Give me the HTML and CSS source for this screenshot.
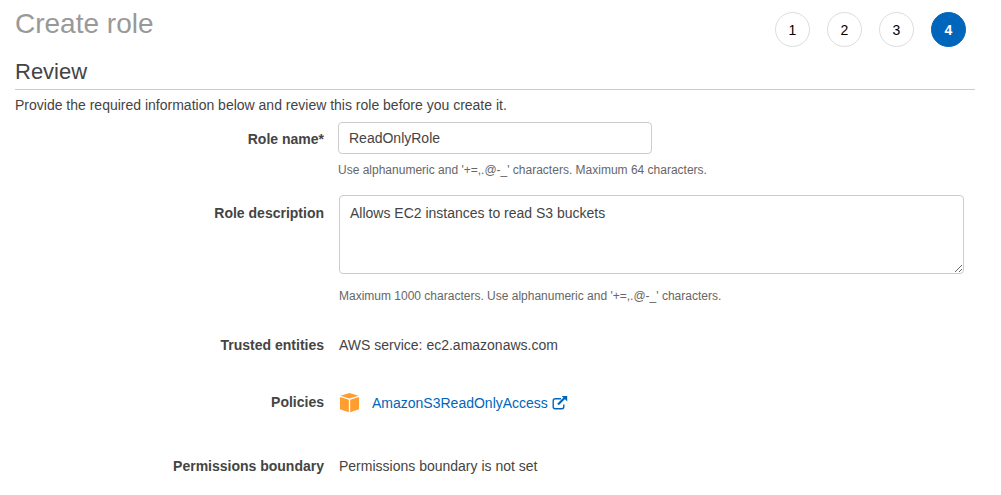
FILE: index.html
```html
<!DOCTYPE html>
<html lang="en">
<head>
<meta charset="utf-8">
<title>Create role</title>
<link rel="stylesheet" href="styles.css">
</head>
<body>
<main class="page">
  <header class="page-header">
    <h1 class="page-title">Create role</h1>
    <ol class="steps">
      <li class="step">1</li>
      <li class="step">2</li>
      <li class="step">3</li>
      <li class="step step-current" aria-current="step">4</li>
    </ol>
  </header>
  <h2 class="section-title">Review</h2>
  <p class="intro">Provide the required information below and review this role before you create it.</p>
  <form class="review-form">
    <div class="row row-name">
      <label class="label" for="role-name">Role name*</label>
      <div class="field">
        <input class="text-input" id="role-name" type="text" value="ReadOnlyRole">
        <p class="help">Use alphanumeric and '+=,.@-_' characters. Maximum 64 characters.</p>
      </div>
    </div>
    <div class="row row-description">
      <label class="label" for="role-description">Role description</label>
      <div class="field">
        <textarea class="text-area" id="role-description">Allows EC2 instances to read S3 buckets</textarea>
        <p class="help help-spaced">Maximum 1000 characters. Use alphanumeric and '+=,.@-_' characters.</p>
      </div>
    </div>
    <div class="row row-static">
      <span class="label">Trusted entities</span>
      <span class="value">AWS service: ec2.amazonaws.com</span>
    </div>
    <div class="row row-policies">
      <span class="label">Policies</span>
      <div class="policy">
        <svg class="policy-icon" viewBox="0 0 22 22" aria-hidden="true">
          <path d="M11 1 20.500 3.800 11 6.800 1.500 3.800Z"/>
          <path d="M1 5.200 10.300 8.100V21.200L1 18.200Z"/>
          <path d="M21 5.200 11.700 8.100V21.200L21 18.200Z"/>
        </svg>
        <a class="policy-link" href="#">AmazonS3ReadOnlyAccess
          <svg class="external-icon" viewBox="0 0 16 14" aria-hidden="true">
            <path class="external-box" d="M9 2.800H3.200Q1.200 2.800 1.200 4.800V10.800Q1.200 12.800 3.200 12.800H9.800Q11.800 12.800 11.800 10.800V8.500"/>
            <path class="external-shaft" d="M6 8.500 12.500 2"/>
            <path class="external-head" d="M9.700 0H15.200V5.500Z"/>
          </svg>
        </a>
      </div>
    </div>
    <div class="row row-static">
      <span class="label">Permissions boundary</span>
      <span class="value">Permissions boundary is not set</span>
    </div>
  </form>
</main>
</body>
</html>
```
FILE: styles.css
```css
* {
  box-sizing: border-box;
}

body {
  margin: 0;
  background: #fff;
  color: #444;
  font: 14px/20px "Helvetica Neue", "Liberation Sans", Arial, sans-serif;
}

h1, h2, p, ol {
  margin: 0;
  padding: 0;
}

.page {
  padding: 8px 26px 16px 15px;
}

.page-header {
  display: flex;
  justify-content: space-between;
  align-items: flex-start;
  padding-right: 9px;
}

.page-title {
  color: #999;
  font-size: 28px;
  font-weight: 400;
  line-height: 32px;
}

.steps {
  display: flex;
  gap: 17px;
  padding-top: 4px;
  list-style: none;
}

.step {
  display: flex;
  align-items: center;
  justify-content: center;
  width: 35px;
  height: 35px;
  border: 1px solid #ddd;
  border-radius: 50%;
  color: #000;
}

.step-current {
  border-color: #0066bb;
  background: #0066bb;
  color: #fff;
  font-weight: 700;
}

.section-title {
  padding: 11px 0 3px;
  border-bottom: 1px solid #ccc;
  font-size: 22px;
  font-weight: 400;
  line-height: 28px;
}

.intro {
  padding: 5px 0 7px;
}

.row {
  display: grid;
  grid-template-columns: 309px minmax(0, 1fr);
  column-gap: 15px;
}

.label {
  font-weight: 700;
  text-align: right;
}

.row-name {
  column-gap: 14px;
}

.row-name .label {
  padding-top: 7px;
}

.row-description {
  padding: 15px 11px 0 0;
}

.row-description .label {
  padding-top: 8px;
}

.text-input,
.text-area {
  display: block;
  border: 1px solid #ccc;
  border-radius: 4px;
  background: #fff;
  color: #444;
  font: inherit;
}

.text-input {
  width: 314px;
  max-width: 100%;
  height: 32px;
  padding: 5px 10px;
}

.text-area {
  width: 100%;
  height: 79px;
  padding: 7px 10px;
  resize: both;
}

.help {
  padding-top: 6px;
  color: #666;
  font-size: 12px;
}

.help-spaced {
  padding-top: 12px;
}

.row-static {
  padding-top: 29px;
}

.row-policies {
  padding: 37px 0 14px;
}

.policy {
  display: flex;
  align-items: flex-start;
  gap: 12px;
}

.policy-icon {
  width: 21px;
  height: 21px;
  fill: #ff9d2e;
}

.policy-link {
  padding-top: 1px;
  color: #0066bb;
  text-decoration: none;
}

.external-icon {
  width: 16px;
  height: 14px;
  vertical-align: -2px;
  fill: none;
  stroke: #0066bb;
}

.external-box {
  stroke-width: 1.4;
}

.external-shaft {
  stroke-width: 2.2;
}

.external-head {
  fill: #0066bb;
  stroke: none;
}
```
